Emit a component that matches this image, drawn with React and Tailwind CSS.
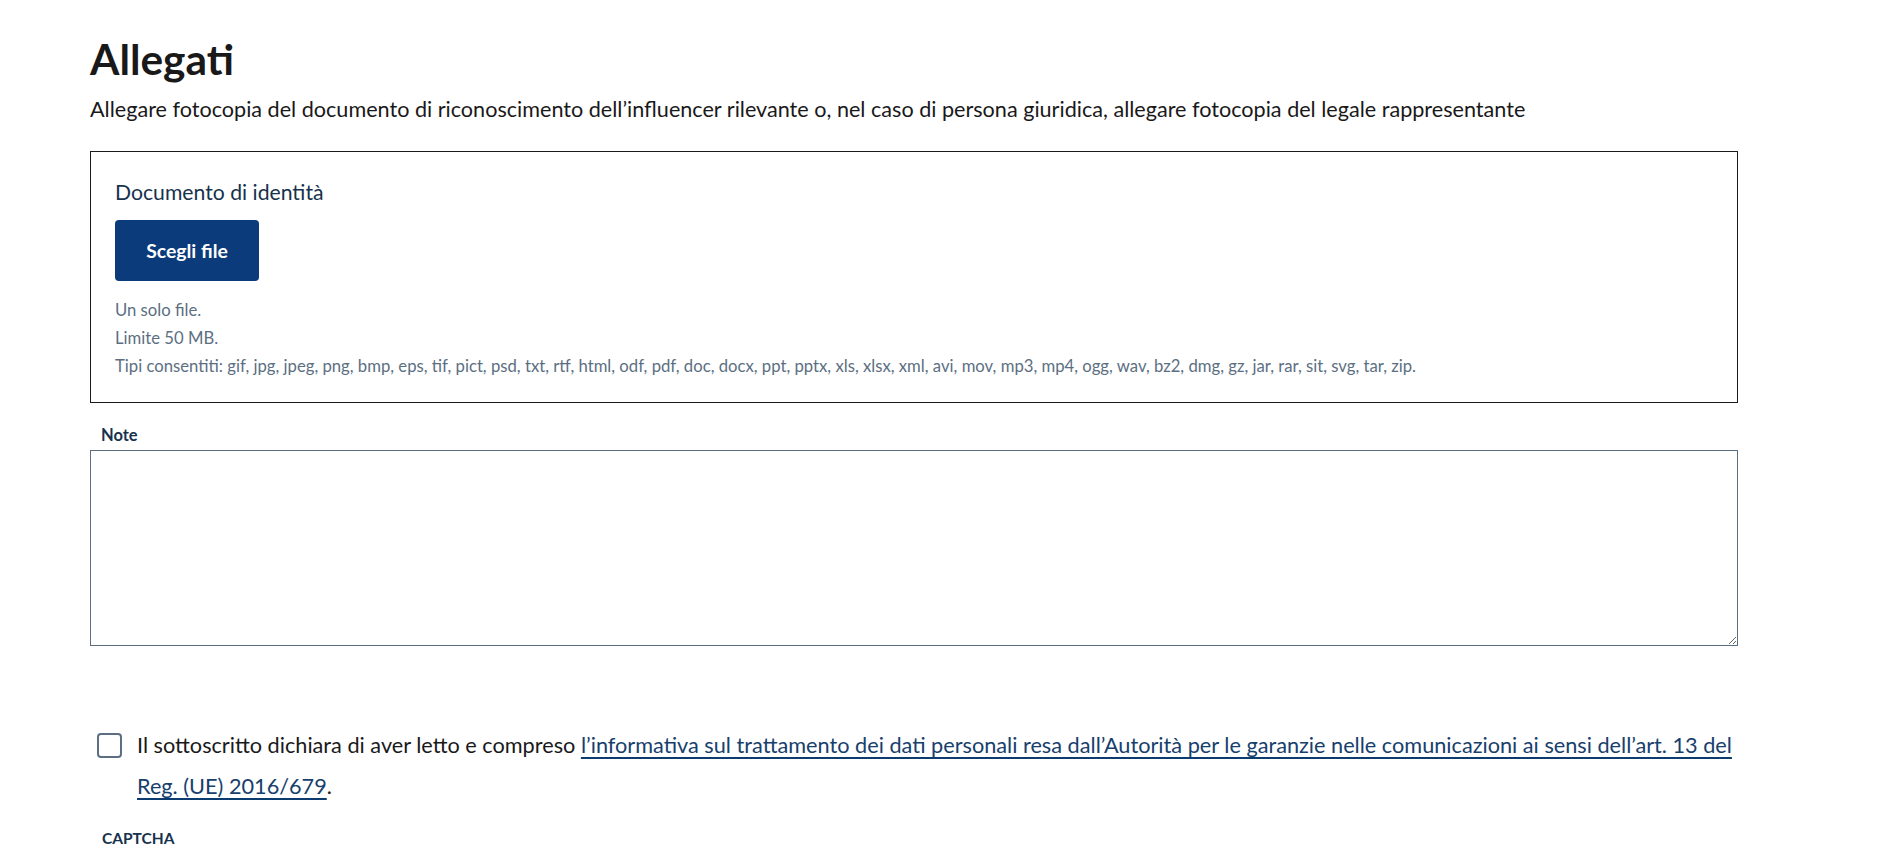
export default function App() {
  const font = { fontFamily: 'Lato, "Liberation Sans", sans-serif' };
  return (
    <div className="min-h-screen bg-white" style={font}>
      <div className="ml-[90px] w-[1648px] pt-[33px]">
        {/* Heading */}
        <h2 className="text-[42.4px] leading-[52px] font-bold text-[#19191a]">Allegati</h2>
        <p className="mt-[9px] text-[21.6px] leading-[30px] text-[#19191a]">
          Allegare fotocopia del documento di riconoscimento dell’influencer rilevante o, nel caso di persona giuridica, allegare fotocopia del legale rappresentante
        </p>

        {/* File upload box */}
        <div className="mt-[27px] border border-[#1a1a1a] px-6 pt-[25px] pb-[22px]">
          <div className="text-[21.2px] leading-[30px] text-[#17324d]">Documento di identità</div>
          <button
            type="button"
            className="mt-[13px] w-[144px] h-[61px] rounded-[4px] bg-[#0b3b7a] text-white text-[19.4px] font-bold"
          >
            Scegli file
          </button>
          <div className="mt-[15px] text-[16.7px] leading-[28px] text-[#5c6f82]">
            <p>Un solo file.</p>
            <p>Limite 50 MB.</p>
            <p>
              Tipi consentiti: gif, jpg, jpeg, png, bmp, eps, tif, pict, psd, txt, rtf, html, odf, pdf, doc, docx, ppt, pptx, xls, xlsx, xml, avi, mov, mp3, mp4, ogg, wav, bz2, dmg, gz, jar, rar, sit, svg, tar, zip.
            </p>
          </div>
        </div>

        {/* Note */}
        <label className="block mt-[22px] ml-[11px] text-[16.5px] leading-[20px] font-bold text-[#17324d]">Note</label>
        <textarea className="block mt-[5px] w-full h-[196px] border border-[#5c6f82] resize-y outline-none" />

        {/* Privacy checkbox */}
        <div className="mt-[79px] flex items-start gap-[15px] pl-[7px]">
          <div className="shrink-0 mt-[8px] w-[25px] h-[25px] rounded-[4px] border-2 border-[#5c6f82] bg-white" />
          <p className="text-[21.7px] leading-[41px] text-[#19191a]">
            Il sottoscritto dichiara di aver letto e compreso{' '}
            <a href="#" className="text-[#17406d] underline underline-offset-[4px] decoration-[2px] decoration-[#0b3b6f]">
              l’informativa sul trattamento dei dati personali resa dall’Autorità per le garanzie nelle comunicazioni ai sensi dell’art. 13 del Reg. (UE) 2016/679
            </a>
            .
          </p>
        </div>

        {/* Captcha */}
        <div className="mt-[21px] ml-[12px] text-[15.5px] leading-[20px] font-bold text-[#17324d]">CAPTCHA</div>
      </div>
    </div>
  );
}
